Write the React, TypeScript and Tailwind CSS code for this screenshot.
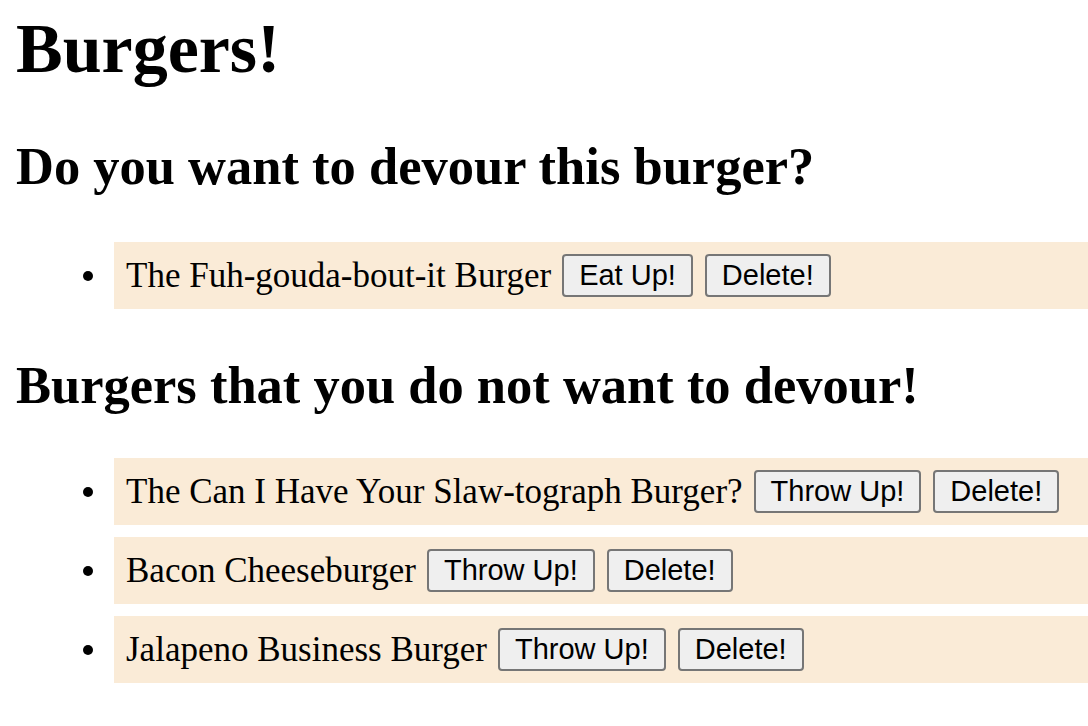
import React from 'react';

interface Burger {
  name: string;
  devoured: boolean;
}

const burgers: Burger[] = [
  { name: 'The Fuh-gouda-bout-it Burger', devoured: false },
  { name: 'The Can I Have Your Slaw-tograph Burger?', devoured: true },
  { name: 'Bacon Cheeseburger', devoured: true },
  { name: 'Jalapeno Business Burger', devoured: true },
];

function BurgerRow({ burger }: { burger: Burger }) {
  return (
    <li className="flex items-center h-[67px]">
      {/* bullet column */}
      <div className="w-[98px] shrink-0 flex items-center">
        <span className="ml-[67px] w-[10px] h-[10px] rounded-full bg-black" />
      </div>
      <div className="flex-1 h-full bg-[#faebd7] pl-[12px] flex items-center whitespace-nowrap">
        <span className="text-[35px] leading-[40px]">{burger.name}</span>
        <button className="ml-[11px] h-[43px] px-[15px] bg-[#efefef] border-2 border-[#767676] rounded-[4px] text-[29px] leading-[35px] font-['Liberation_Sans',Arial,sans-serif] text-black">
          {burger.devoured ? 'Throw Up!' : 'Eat Up!'}
        </button>
        <button className="ml-[12px] h-[43px] px-[15px] bg-[#efefef] border-2 border-[#767676] rounded-[4px] text-[29px] leading-[35px] font-['Liberation_Sans',Arial,sans-serif] text-black">
          Delete!
        </button>
      </div>
    </li>
  );
}

export default function App() {
  const fresh = burgers.filter((b) => !b.devoured);
  const eaten = burgers.filter((b) => b.devoured);

  return (
    <div className="min-h-screen bg-white text-black pt-[9px] pl-[16px] font-['Liberation_Serif','Times_New_Roman',serif] overflow-hidden">
      <h1 className="text-[70px] leading-[80px] font-bold">Burgers!</h1>

      <h2 className="mt-[47px] text-[52.5px] leading-[60px] font-bold">Do you want to devour this burger?</h2>
      <ul className="mt-[46px]">
        {fresh.map((b) => (
          <BurgerRow key={b.name} burger={b} />
        ))}
      </ul>

      <h2 className="mt-[46px] text-[52.5px] leading-[60px] font-bold">Burgers that you do not want to devour!</h2>
      <ul className="mt-[43px] flex flex-col gap-[12px]">
        {eaten.map((b) => (
          <BurgerRow key={b.name} burger={b} />
        ))}
      </ul>
    </div>
  );
}
